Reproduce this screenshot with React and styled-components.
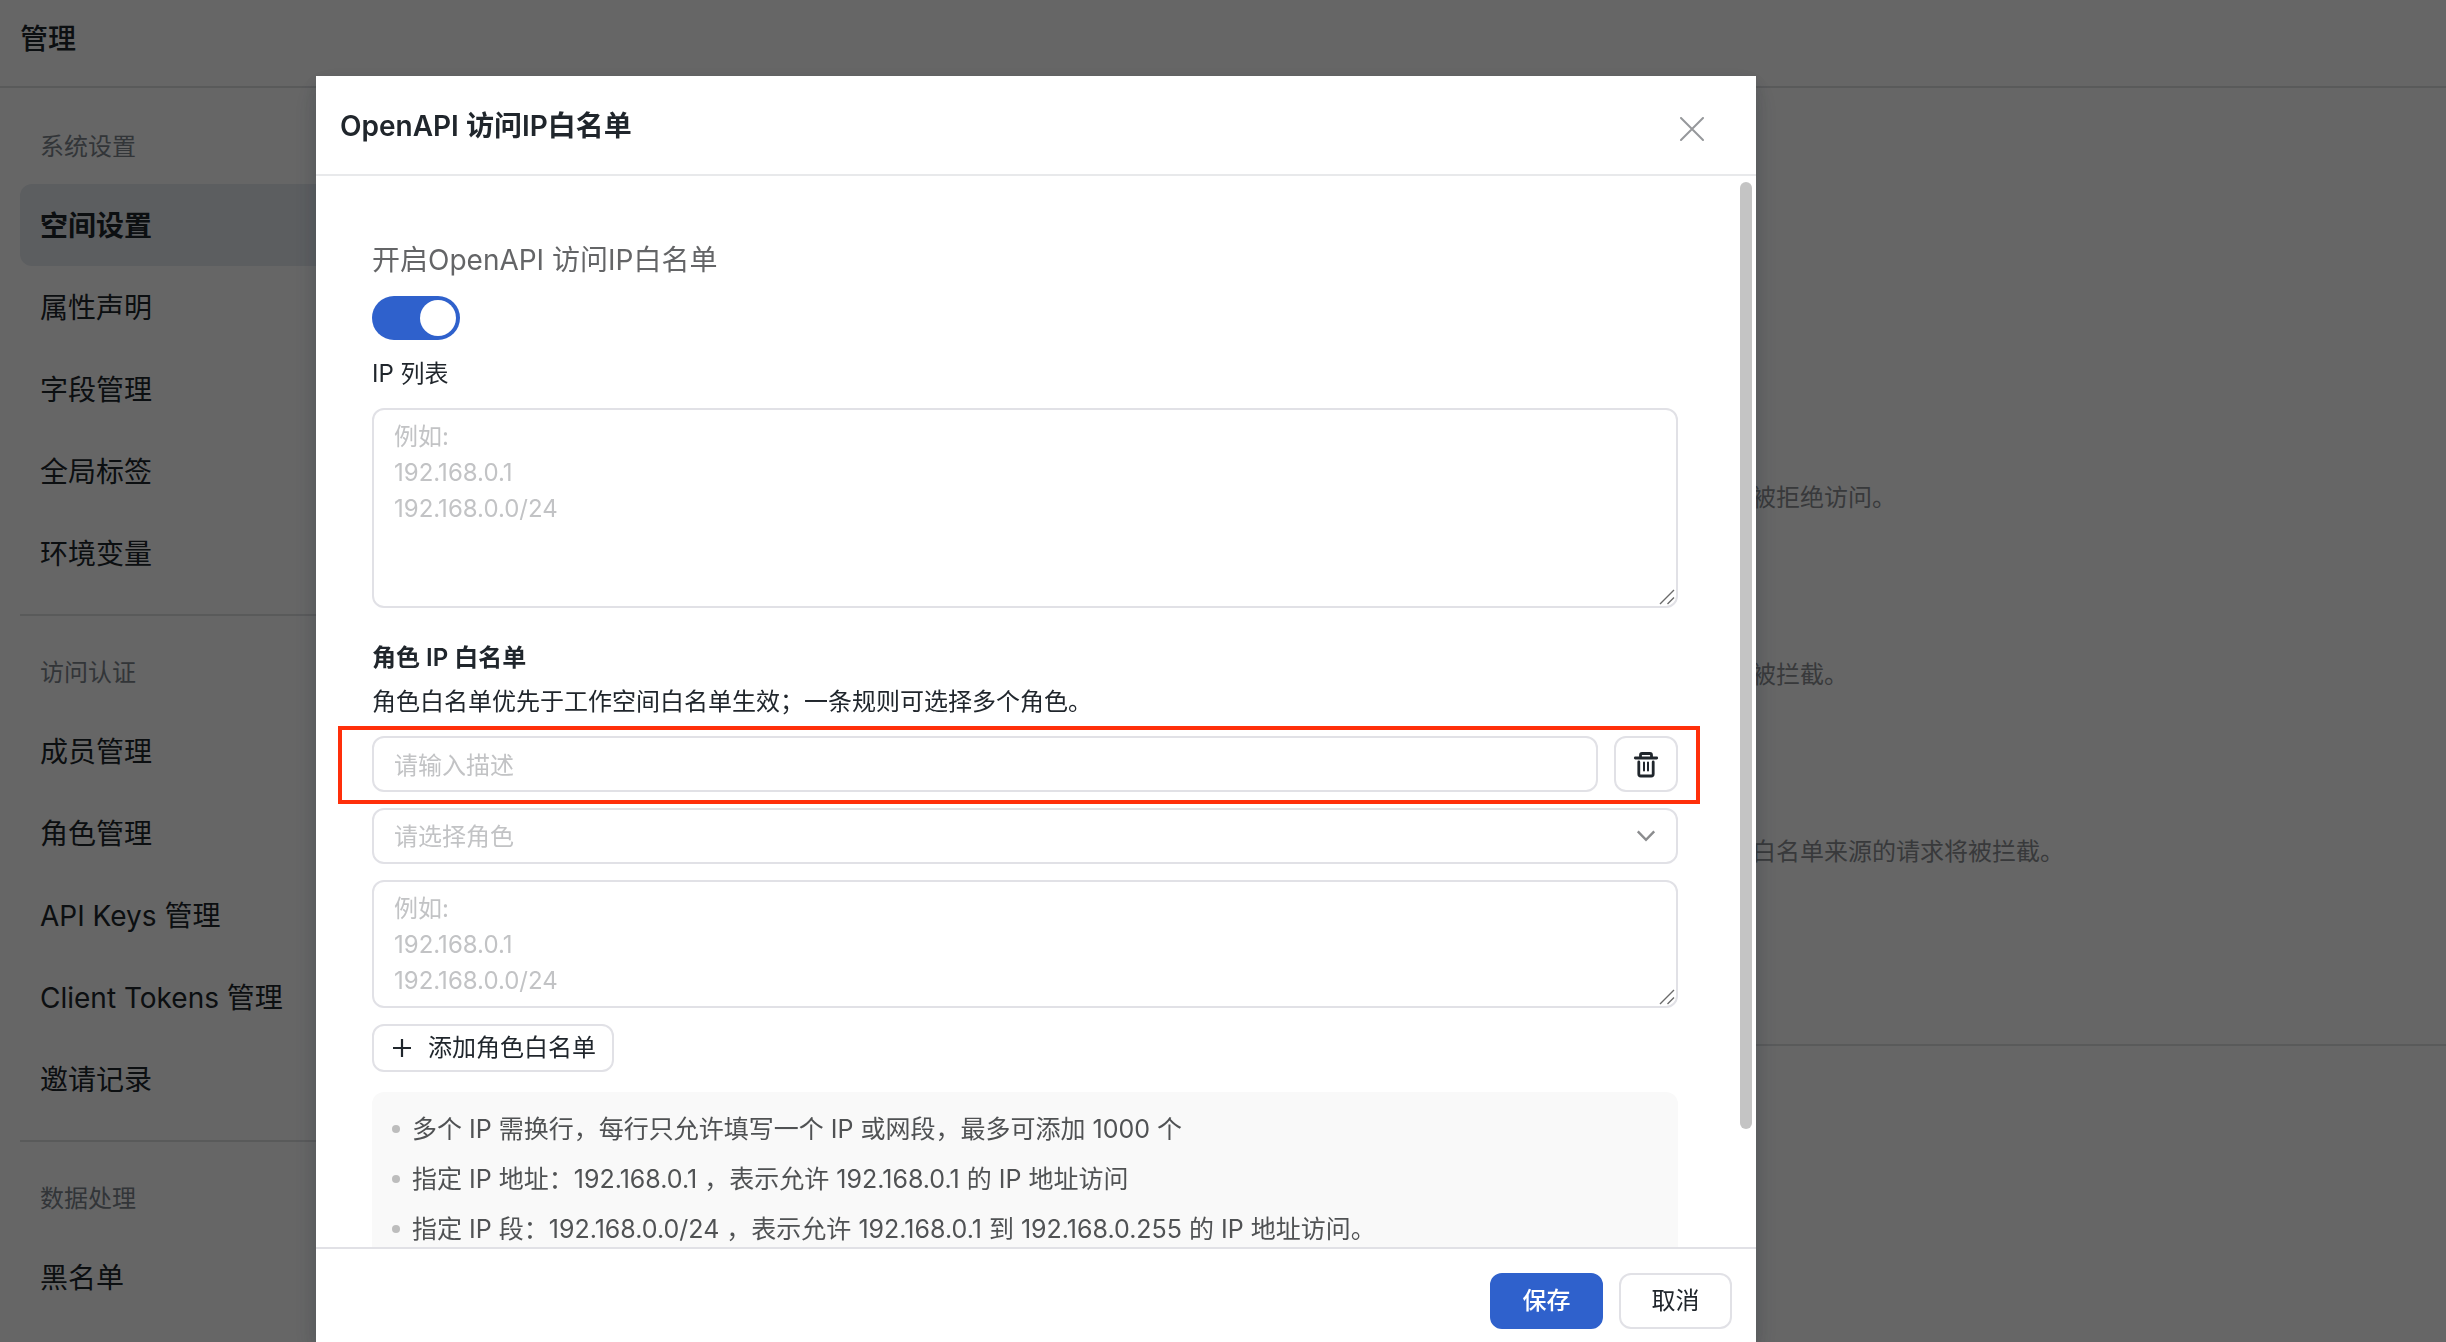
import React, { useState } from "react";
import styled, { createGlobalStyle, css } from "styled-components";

const GlobalStyle = createGlobalStyle`
    * {
        box-sizing: border-box;
    }

    body {
        margin: 0;
        background: #fff;
        color: #20262c;
        font-family: Inter, "Noto Sans CJK SC", sans-serif;
        font-size: 24px;
        line-height: 36px;
    }

    h1, h2, h3, p, ul {
        margin: 0;
        padding: 0;
    }

    button, input, select, textarea {
        font: inherit;
        color: inherit;
    }
`;

const Page = styled.div`
    display: flex;
    flex-direction: column;
    height: 100vh;
    overflow: hidden;
`;

const TopBar = styled.header`
    flex: none;
    display: flex;
    align-items: center;
    height: 88px;
    padding: 0 20px 8px;
    border-bottom: 2px solid #dfe0e2;

    h1 {
        font-size: 28px;
        font-weight: 500;
    }
`;

const Columns = styled.div`
    flex: 1;
    display: flex;
    min-height: 0;
`;

const Sidebar = styled.nav`
    flex: none;
    width: 400px;
    padding: 2px 20px 0;
`;

const Group = styled.section`
    padding: 39px 0 20px;

    & + & {
        border-top: 2px solid #dfe0e2;
    }
`;

const GroupTitle = styled.h2`
    margin-bottom: 19px;
    padding: 0 20px;
    color: #7d858d;
    font-size: 24px;
    font-weight: 400;
`;

const NavItem = styled.a`
    display: flex;
    align-items: center;
    height: 82px;
    padding: 2px 20px 0;
    border-radius: 12px;
    color: inherit;
    font-size: 28px;
    text-decoration: none;

    ${({ $active }) => $active && css`
        background: #e6eaf0;
        font-weight: 600;
    `}
`;

const Main = styled.main`
    flex: 1;
    padding-top: 392px;
`;

const Hints = styled.div`
    display: flex;
    flex-direction: column;
    gap: 141px;
    padding: 0 0 174px 1352px;
    border-bottom: 2px solid #dfe0e2;
    color: #8c8f93;
    white-space: nowrap;
`;

const Overlay = styled.div`
    position: fixed;
    inset: 0;
    display: flex;
    padding: 76px 690px 0 316px;
    background: rgba(0, 0, 0, .6);
`;

const Modal = styled.div`
    flex: 1;
    display: flex;
    flex-direction: column;
    min-width: 0;
    background: #fff;
    box-shadow: 0 12px 28px rgba(31, 41, 55, .14), 0 6px 16px rgba(31, 41, 55, .16);
`;

const ModalHeader = styled.header`
    flex: none;
    display: flex;
    align-items: center;
    justify-content: space-between;
    height: 100px;
    padding: 2px 48px 0 24px;
    border-bottom: 2px solid #e8e9eb;

    h2 {
        font-size: 28px;
        font-weight: 600;
    }
`;

const CloseButton = styled.button`
    display: flex;
    padding: 6px 4px 0;
    border: 0;
    background: none;
    color: #96989b;
`;

const ModalBody = styled.div`
    flex: 1;
    display: flex;
    min-height: 0;
`;

const ScrollArea = styled.div`
    flex: 1;
    min-width: 0;
    padding: 64px 62px 64px 56px;
    overflow-y: auto;
    scrollbar-width: none;
`;

const ScrollTrack = styled.div`
    flex: none;
    display: flex;
    width: 16px;
    padding: 6px 4px 118px 0;
`;

const ScrollThumb = styled.div`
    flex: 1;
    border-radius: 6px;
    background: #c4c4c4;
`;

const Form = styled.form`
    display: flex;
    flex-direction: column;
    gap: 16px;
`;

const SwitchLabel = styled.label`
    color: #646567;
    font-size: 28px;
    line-height: 40px;
`;

const Switch = styled.input`
    appearance: none;
    display: flex;
    justify-content: flex-start;
    width: 88px;
    height: 44px;
    margin: 0;
    padding: 4px;
    border-radius: 22px;
    background: #c4c4c4;

    &::before {
        content: "";
        width: 36px;
        height: 36px;
        border-radius: 50%;
        background: #fff;
    }

    &:checked {
        justify-content: flex-end;
        background: #2f61cc;
    }
`;

const SectionHead = styled.div`
    display: flex;
    flex-direction: column;
    gap: 8px;
    padding-top: 16px;

    h3 {
        font-size: 24px;
        font-weight: 600;
    }
`;

const campo = css`
    width: 100%;
    margin: 0;
    padding: 9px 20px 7px;
    border: 2px solid #e1e1e6;
    border-radius: 12px;
    outline: none;
    background: #fff;

    &::placeholder {
        color: #c2c3c5;
        opacity: 1;
    }
`;

const TextInput = styled.input`
    ${campo}
    flex: 1;
    min-width: 0;
    height: 56px;
`;

const SelectWrap = styled.div`
    position: relative;
    display: flex;

    svg {
        position: absolute;
        top: 22px;
        right: 22px;
        pointer-events: none;
    }
`;

const Select = styled.select`
    ${campo}
    appearance: none;
    height: 56px;
    color: #c2c3c5;
`;

const AreaWrap = styled.div`
    position: relative;
    display: flex;

    svg {
        position: absolute;
        right: 3px;
        bottom: 3px;
        pointer-events: none;
    }
`;

const TextArea = styled.textarea`
    ${campo}
    height: ${({ $tall }) => ($tall ? "200px" : "128px")};
    resize: none;
    overflow: hidden;
`;

const RuleRow = styled.div`
    position: relative;
    display: flex;
    gap: 16px;

    &::after {
        content: "";
        position: absolute;
        inset: -10px -22px -12px -34px;
        border: 4px solid #ff2f0a;
        pointer-events: none;
    }
`;

const Button = styled.button`
    display: flex;
    align-items: center;
    justify-content: center;
    width: ${({ $width }) => $width || "auto"};
    height: 56px;
    padding: 0;
    border: 2px solid ${({ $primary }) => ($primary ? "#2f61cc" : "#e1e1e6")};
    border-radius: 12px;
    background: ${({ $primary }) => ($primary ? "#2f61cc" : "#fff")};
    color: ${({ $primary }) => ($primary ? "#fff" : "#20262c")};
    font-weight: ${({ $primary }) => ($primary ? 500 : 400)};
`;

const AddButton = styled(Button)`
    align-self: flex-start;
    gap: 12px;
    height: 48px;
    padding: 0 16px 0 14px;
`;

const Notes = styled.ul`
    margin-top: 4px;
    padding: 12px 20px;
    border-radius: 12px;
    background: #f9f9f9;
    color: #505254;
    font-size: 25px;
    list-style: none;

    li {
        display: flex;
        align-items: center;
        gap: 12px;
        height: 50px;
    }

    li::before {
        content: "";
        width: 8px;
        height: 8px;
        border-radius: 50%;
        background: #bdbdbd;
    }
`;

const ModalFooter = styled.footer`
    flex: none;
    display: flex;
    justify-content: flex-end;
    gap: 16px;
    padding: 24px 24px 13px;
    border-top: 2px solid #e1e1e6;
`;

const CloseIcon = () => (
    <svg width="24" height="24" viewBox="0 0 24 24" fill="none" stroke="currentColor" strokeWidth="2" strokeLinecap="round">
        <path d="M1 1l22 22M23 1L1 23" />
    </svg>
);

const TrashIcon = () => (
    <svg width="26" height="28" viewBox="0 0 26 28" fill="none" stroke="currentColor" strokeWidth="2.8" strokeLinecap="round" strokeLinejoin="round">
        <path d="M2.3 8h21.4" />
        <path d="M7.5 7.5V5A1.5 1.5 0 0 1 9 3.5h8A1.5 1.5 0 0 1 18.5 5v2.5" />
        <path d="M5.8 12v12a2 2 0 0 0 2 2h10.4a2 2 0 0 0 2-2V12" />
        <path d="M11 12.5v8M15 12.5v8" strokeWidth="2" />
    </svg>
);

const ChevronIcon = () => (
    <svg width="20" height="12" viewBox="0 0 20 12" fill="none" stroke="#8b8c8e" strokeWidth="2.4">
        <path d="M1.8 1.4L10 9.8l8.2-8.4" />
    </svg>
);

const PlusIcon = () => (
    <svg width="28" height="28" viewBox="0 0 28 28" fill="none" stroke="currentColor" strokeWidth="2.2">
        <path d="M14 5v18M5 14h18" />
    </svg>
);

const GripIcon = () => (
    <svg width="16" height="16" viewBox="0 0 16 16" fill="none" stroke="#6a6a6a" strokeWidth="1.4">
        <path d="M1 15L15 1M8.5 15L15 8.5" />
    </svg>
);

const grupos = [
    { titulo: "系统设置", items: ["空间设置", "属性声明", "字段管理", "全局标签", "环境变量"] },
    { titulo: "访问认证", items: ["成员管理", "角色管理", "API Keys 管理", "Client Tokens 管理", "邀请记录"] },
    { titulo: "数据处理", items: ["黑名单"] }
];

const ejemplo = "例如:\n192.168.0.1\n192.168.0.0/24";

const IpArea = ({ id, tall, label }) => (
    <AreaWrap>
        <TextArea id={id} $tall={tall} placeholder={ejemplo} aria-label={label} />
        <GripIcon />
    </AreaWrap>
);

const Menu = () => (
    <Sidebar>
        {grupos.map((grupo) => (
            <Group key={grupo.titulo}>
                <GroupTitle>{grupo.titulo}</GroupTitle>
                {grupo.items.map((item) => (
                    <NavItem key={item} href="#" $active={item === "空间设置"}>{item}</NavItem>
                ))}
            </Group>
        ))}
    </Sidebar>
);

const WhitelistModal = () => {
    const [activo, setActivo] = useState(true);

    return (
        <Modal role="dialog" aria-labelledby="modal-title">
            <ModalHeader>
                <h2 id="modal-title">OpenAPI 访问IP白名单</h2>
                <CloseButton type="button" aria-label="关闭"><CloseIcon /></CloseButton>
            </ModalHeader>

            <ModalBody>
                <ScrollArea>
                    <Form id="whitelist">
                        <SwitchLabel htmlFor="enabled">开启OpenAPI 访问IP白名单</SwitchLabel>
                        <Switch
                            id="enabled"
                            type="checkbox"
                            role="switch"
                            checked={activo}
                            onChange={() => setActivo(!activo)}
                        />
                        <label htmlFor="ip-list">IP 列表</label>
                        <IpArea id="ip-list" tall />

                        <SectionHead>
                            <h3>角色 IP 白名单</h3>
                            <p>角色白名单优先于工作空间白名单生效；一条规则可选择多个角色。</p>
                        </SectionHead>
                        <RuleRow>
                            <TextInput type="text" placeholder="请输入描述" aria-label="描述" />
                            <Button type="button" $width="64px" aria-label="删除"><TrashIcon /></Button>
                        </RuleRow>
                        <SelectWrap>
                            <Select aria-label="角色" defaultValue="">
                                <option value="">请选择角色</option>
                            </Select>
                            <ChevronIcon />
                        </SelectWrap>
                        <IpArea id="role-ip-list" label="角色 IP" />
                        <AddButton type="button"><PlusIcon />添加角色白名单</AddButton>

                        <Notes>
                            <li>多个 IP 需换行，每行只允许填写一个 IP 或网段，最多可添加 1000 个</li>
                            <li>指定 IP 地址：192.168.0.1 ，表示允许 192.168.0.1 的 IP 地址访问</li>
                            <li>指定 IP 段：192.168.0.0/24 ，表示允许 192.168.0.1 到 192.168.0.255 的 IP 地址访问。</li>
                        </Notes>
                    </Form>
                </ScrollArea>
                <ScrollTrack><ScrollThumb /></ScrollTrack>
            </ModalBody>

            <ModalFooter>
                <Button type="submit" form="whitelist" $primary $width="113px">保存</Button>
                <Button type="button" $width="113px">取消</Button>
            </ModalFooter>
        </Modal>
    );
}

const App = () => {
    return (
        <>
            <GlobalStyle />
            <Page>
                <TopBar><h1>管理</h1></TopBar>
                <Columns>
                    <Menu />
                    <Main>
                        <Hints>
                            <p>被拒绝访问。</p>
                            <p>被拦截。</p>
                            <p>白名单来源的请求将被拦截。</p>
                        </Hints>
                    </Main>
                </Columns>
            </Page>
            <Overlay>
                <WhitelistModal />
            </Overlay>
        </>
    );
}

export default App;
